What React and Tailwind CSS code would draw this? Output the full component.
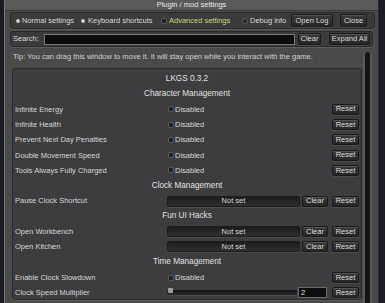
import React from 'react'

const rows = [
  { type: 'title', text: 'LKGS 0.3.2' },
  { type: 'head', text: 'Character Management' },
  { type: 'toggle', text: 'Infinite Energy' },
  { type: 'toggle', text: 'Infinite Health' },
  { type: 'toggle', text: 'Prevent Next Day Penalties' },
  { type: 'toggle', text: 'Double Movement Speed' },
  { type: 'toggle', text: 'Tools Always Fully Charged' },
  { type: 'head', text: 'Clock Management' },
  { type: 'key', text: 'Pause Clock Shortcut' },
  { type: 'head', text: 'Fun UI Hacks' },
  { type: 'key', text: 'Open Workbench' },
  { type: 'key', text: 'Open Kitchen' },
  { type: 'head', text: 'Time Management' },
  { type: 'toggle', text: 'Enable Clock Slowdown' },
  { type: 'slider', text: 'Clock Speed Multiplier', value: '2' },
]

function Btn({ children, className = '' }) {
  return (
    <div
      className={`flex shrink-0 items-center justify-center rounded-[2px] border border-[#1a1a1a] bg-linear-to-b from-[#3b3b3b] to-[#262626] leading-none text-[#dadada] shadow-[inset_0_1px_0_rgba(255,255,255,0.13),0_1px_0_rgba(255,255,255,0.08)] ${className}`}
    >
      {children}
    </div>
  )
}

function Radio({ on }) {
  return (
    <span
      className={`inline-block h-[6px] w-[6px] shrink-0 rounded-full border ${on ? 'border-[#2a2a2a] bg-[#d2d2d2]' : 'border-[#5a5a5a] bg-[#262626]'}`}
    />
  )
}

function Box() {
  return <span className="inline-block h-[6px] w-[6px] shrink-0 rounded-[2px] border border-[#5c5c5c] bg-[#202020]" />
}

function Row({ row }) {
  if (row.type === 'title' || row.type === 'head') {
    return (
      <div className="flex h-[15.3px] items-center justify-center text-[8.2px] text-[#e2e2e2]">{row.text}</div>
    )
  }
  return (
    <div className="flex h-[15.3px] items-center pl-[2px] pr-[2px]">
      <div className="w-[152px] shrink-0 text-[7.5px] text-[#d6d6d6]">{row.text}</div>
      <div className="flex min-w-0 flex-1 items-center">
        {row.type === 'toggle' && (
          <div className="flex items-center gap-[1px] pl-[1px] text-[7.5px] text-[#d6d6d6]">
            <Box />
            <span>Disabled</span>
          </div>
        )}
        {row.type === 'key' && (
          <>
            <div className="flex h-[11px] flex-1 items-center justify-center rounded-[2px] border border-[#1c1c1c] bg-linear-to-b from-[#1c1c1c] to-[#303030] text-[7.5px] text-[#d6d6d6] shadow-[0_1px_0_rgba(255,255,255,0.08)]">
              Not set
            </div>
            <Btn className="ml-[2px] h-[11px] w-[26px] text-[7.5px]">Clear</Btn>
          </>
        )}
        {row.type === 'slider' && (
          <>
            <div className="relative flex h-[11px] flex-1 items-center">
              <div className="h-[5px] w-full rounded-[2px] bg-linear-to-b from-[#111] to-[#2e2e2e] shadow-[0_1px_0_rgba(255,255,255,0.08)]" />
              <div className="absolute left-[1px] top-[1px] h-[5px] w-[5px] rounded-[1px] bg-[#9c9c9c]" />
            </div>
            <div className="ml-[1px] mr-[1px] flex h-[11px] w-[29px] shrink-0 items-center border border-[#6a6a6a] bg-[#0e0e0e] pl-[2px] text-[7.5px] text-[#e4e4e4]">
              {row.value}
            </div>
          </>
        )}
      </div>
      <Btn className="ml-[4px] h-[11px] w-[27px] text-[7.5px]">Reset</Btn>
    </div>
  )
}

export default function App() {
  return (
    <div className="flex h-[303px] w-[385px] overflow-hidden bg-[#1c1c24] font-['Liberation_Sans',Arial,sans-serif]">
      <div className="ml-[4px] flex h-full w-[375px] flex-col border-l border-r border-l-[#7a7a7a] border-r-[#2a2a2a] bg-[#4a4a4a]">
        <div className="flex h-[11px] shrink-0 items-center justify-center border-b border-[#3a3a3a] bg-[#5a5a5a] text-[7.5px] text-[#e8e8e8]">
          Plugin / mod settings
        </div>

        <div className="ml-[5px] mr-[3px] mt-[1px] flex h-[17px] shrink-0 items-center rounded-[3px] border border-[#2a2a2a] bg-[#3b3b3b] pl-[4px] text-[7.5px] text-[#d8d8d8] shadow-[0_1px_0_rgba(255,255,255,0.1)]">
          <div className="flex w-[65px] items-center gap-[1px]">
            <Radio on />
            <span>Normal settings</span>
          </div>
          <div className="flex w-[81px] items-center gap-[2px]">
            <Radio on />
            <span>Keyboard shortcuts</span>
          </div>
          <div className="flex w-[81px] items-center gap-[2px] text-[#c9d67c]">
            <Box />
            <span>Advanced settings</span>
          </div>
          <div className="flex w-[49px] items-center gap-[2px]">
            <Radio />
            <span>Debug info</span>
          </div>
          <Btn className="h-[13px] w-[42px]">Open Log</Btn>
          <Btn className="ml-[7px] h-[13px] w-[27px]">Close</Btn>
        </div>

        <div className="ml-[5px] mr-[5px] mt-[2px] flex h-[16px] shrink-0 items-center rounded-[3px] border border-[#2a2a2a] bg-[#3b3b3b] pl-[2px] text-[7.5px] text-[#d8d8d8] shadow-[0_1px_0_rgba(255,255,255,0.1)]">
          <span className="w-[31px]">Search:</span>
          <div className="h-[11px] w-[251px] border border-[#777] bg-[#0c0c0c]" />
          <Btn className="ml-[3px] h-[12px] w-[23px]">Clear</Btn>
          <Btn className="ml-[8px] h-[12px] w-[41px]">Expand All</Btn>
        </div>

        <div className="mt-[3px] flex min-h-0 flex-1 pl-[7px]">
          <div className="flex w-[350px] flex-col">
            <div className="flex h-[14px] items-center pl-[1px] text-[7.5px] text-[#cfcfcf]">
              Tip: You can drag this window to move it. It will stay open while you interact with the game.
            </div>
            <div className="mt-[4px] h-[232px] rounded-[3px] border border-[#2a2a2a] bg-[#3d3c3f] pt-[2px] shadow-[0_1px_0_rgba(255,255,255,0.1)]">
              {rows.map((r, i) => (
                <Row key={i} row={r} />
              ))}
            </div>
          </div>
          <div className="ml-[1px] mt-[2px] flex w-[9px] justify-center rounded-t-full bg-[#5a5a5a]">
            <div className="w-[5px] rounded-t-full bg-[#141414]" />
          </div>
        </div>
      </div>
    </div>
  )
}
